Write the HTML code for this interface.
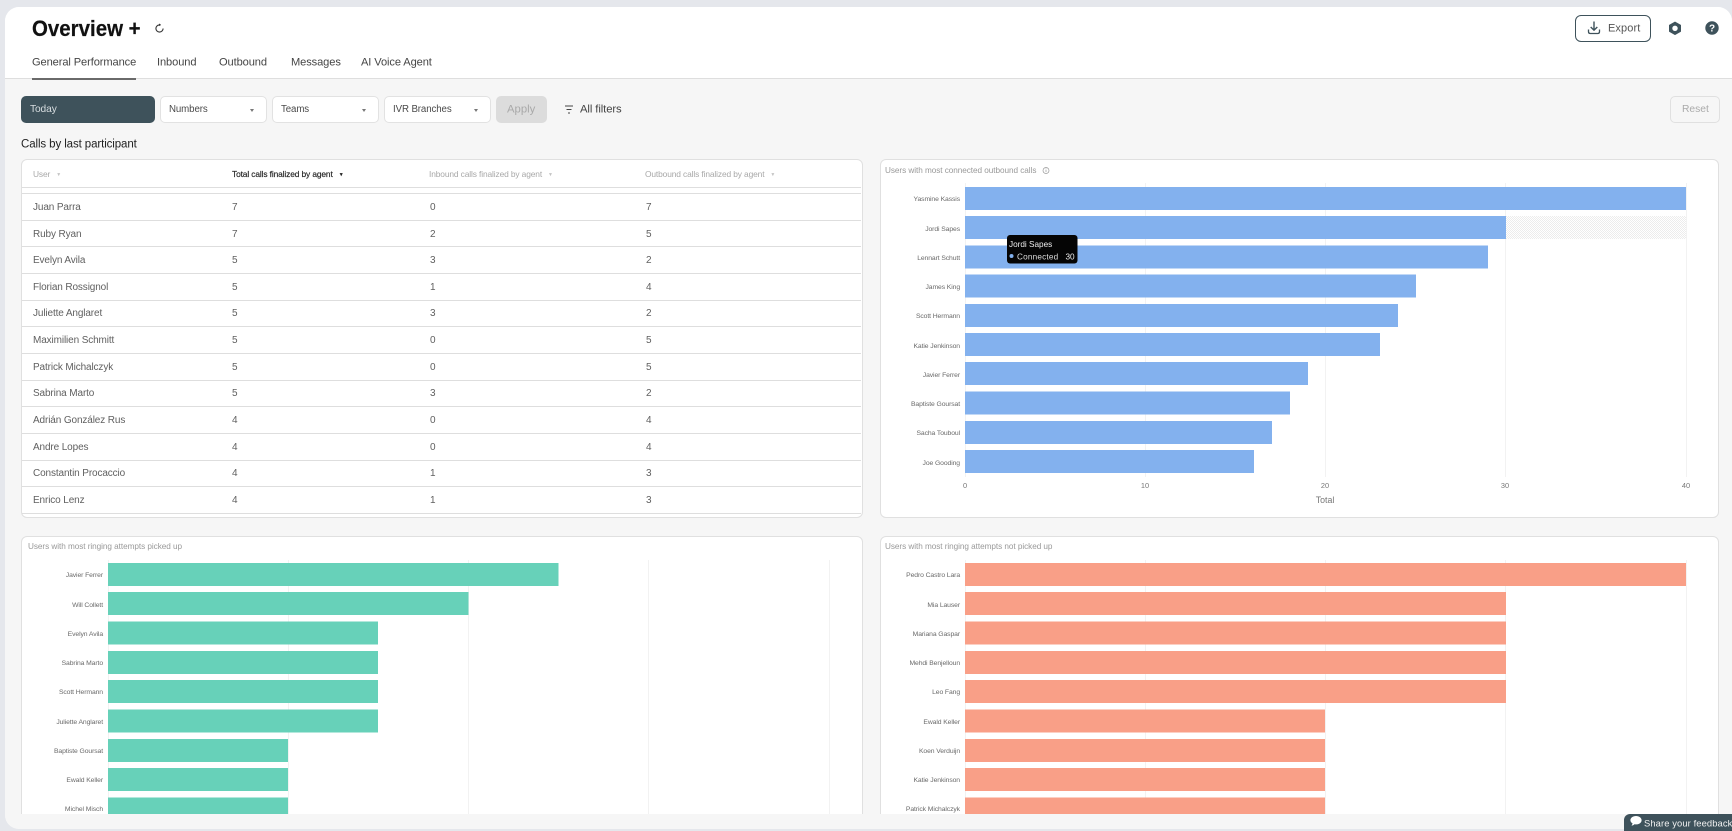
<!DOCTYPE html>
<html><head><meta charset="utf-8"><title>Overview</title>
<style>
html,body{margin:0;padding:0;width:1732px;height:831px;overflow:hidden;background:#e5e7ec;font-family:"Liberation Sans",sans-serif}
#panel{position:absolute;left:5px;top:7px;width:1727px;height:822px;background:#f6f6f6;border-radius:14px 14px 0 14px;overflow:hidden}
#page{position:absolute;left:-5px;top:-7px;width:1732px;height:831px}
.t{position:absolute;white-space:nowrap;line-height:1;transform:translateY(-50%)}
.box{position:absolute;box-sizing:border-box}
.tab{font-size:11.100px;color:#454545;top:63px;letter-spacing:-.1px}
.btn{background:#fff;border:1px solid #e2e2e2;border-radius:5px;top:96px;height:27px}
.f{font-size:9.700px;color:#4a4a4a;top:110px;letter-spacing:-.1px}
.arr{position:absolute;top:108.500px;width:0;height:0;border-left:2.500px solid transparent;border-right:2.500px solid transparent;border-top:3px solid #777}
.card{background:#fff;border:1px solid #e0e0e0;border-radius:6px}
.line{position:absolute;left:22px;width:839px;height:1px;background:#dedede}
.h{font-size:8.400px;color:#a8a8a8;top:174px;letter-spacing:-.12px}
.h span{font-size:5px;margin-left:6px;color:#c4c4c4;vertical-align:1px}
.c{font-size:10px;color:#606060;letter-spacing:-.12px;margin-top:1px}
svg{position:absolute;left:0;top:0}
svg text{font-family:"Liberation Sans",sans-serif}
.l{font-size:6.800px;fill:#6a6a6a;text-anchor:end;letter-spacing:-.1px}
.a{font-size:7.400px;fill:#777;text-anchor:middle}
.ct{font-size:8.200px;fill:#999;letter-spacing:-.05px}
.g{stroke:#f2f2f2;stroke-width:1}
</style></head><body>
<div id="panel"><div id="page">

<div class="box" style="left:0;top:0;width:1732px;height:79px;background:#fff;border-bottom:1px solid #dedede"></div>
<div class="t" style="left:32px;top:28.500px;font-size:22px;font-weight:bold;color:#111;-webkit-text-stroke:.2px #111;transform:translateY(-50%) scaleX(.93);transform-origin:left center">Overview +</div>
<svg width="1732" height="831" style="pointer-events:none">
<circle cx="159.500" cy="28.500" r="3.600" fill="none" stroke="#333" stroke-width="1.100" stroke-dasharray="18 5"/>
<path d="M159 23.500l2 1.300-2 1.300z" fill="#333"/>
</svg>

<div class="t tab" style="left:32px">General Performance</div>
<div class="t tab" style="left:157px">Inbound</div>
<div class="t tab" style="left:219px">Outbound</div>
<div class="t tab" style="left:291px">Messages</div>
<div class="t tab" style="left:361px">AI Voice Agent</div>
<div class="box" style="left:32px;top:78px;width:104px;height:2px;background:#6a6a6a"></div>

<div class="box" style="left:1575px;top:15px;width:76px;height:27px;border:1px solid #3e525b;border-radius:6px;background:#fff"></div>
<svg width="1732" height="831">
<path d="M1594 21.500v8.500M1590.700 27l3.300 3.200 3.300-3.200" fill="none" stroke="#3e525b" stroke-width="1.400"/>
<path d="M1588.500 29.500v2.300q0 1.700 1.700 1.700h7.600q1.700 0 1.700-1.700v-2.300" fill="none" stroke="#3e525b" stroke-width="1.300"/>
<path d="M1675 22.300l5.300 3v6l-5.300 3-5.300-3v-6z" fill="#3e525b" stroke="#3e525b" stroke-width="1.400" stroke-linejoin="round"/>
<circle cx="1675" cy="28.300" r="2.700" fill="#fff"/>
<circle cx="1712" cy="28" r="6.700" fill="#3e525b"/>
<text x="1712" y="31.500" text-anchor="middle" font-size="10" font-weight="bold" fill="#fff">?</text>
</svg>
<div class="t" style="left:1608px;top:29px;font-size:11px;color:#555;letter-spacing:.1px">Export</div>

<div class="box" style="left:21px;top:96px;width:134px;height:27px;background:#3e525b;border-radius:5px"></div>
<div class="t f" style="left:30px;color:#d8dde0;font-size:10.200px">Today</div>
<div class="box btn" style="left:160px;width:107px"></div>
<div class="t f" style="left:169px">Numbers</div><div class="arr" style="left:250px"></div>
<div class="box btn" style="left:272px;width:107px"></div>
<div class="t f" style="left:281px">Teams</div><div class="arr" style="left:362px"></div>
<div class="box btn" style="left:384px;width:107px"></div>
<div class="t f" style="left:393px">IVR Branches</div><div class="arr" style="left:474px"></div>
<div class="box" style="left:496px;top:96px;width:51px;height:27px;background:#dcdcdc;border-radius:5px"></div>
<div class="t" style="left:507px;top:110px;font-size:11.300px;color:#a9a9a9">Apply</div>
<svg width="1732" height="831"><path d="M565 106h8M566.500 109.500h5M568 113h2" stroke="#444" stroke-width="1" fill="none"/></svg>
<div class="t" style="left:580px;top:110px;font-size:11.300px;color:#444;letter-spacing:-.1px">All filters</div>
<div class="box" style="left:1670px;top:96px;width:50px;height:27px;border:1px solid #e0e0e0;border-radius:5px"></div>
<div class="t" style="left:1682px;top:110px;font-size:10.300px;color:#aaa">Reset</div>

<div class="t" style="left:21px;top:145px;font-size:11.500px;color:#222;letter-spacing:-.1px">Calls by last participant</div>

<div class="box card" style="left:21px;top:159px;width:842px;height:359px"></div>
<div class="t h" style="left:33px">User<span>&#9660;</span></div>
<div class="t h" style="left:232px;color:#222;-webkit-text-stroke:.15px #222">Total calls finalized by agent<span style="color:#222">&#9660;</span></div>
<div class="t h" style="left:429px">Inbound calls finalized by agent<span>&#9660;</span></div>
<div class="t h" style="left:645px">Outbound calls finalized by agent<span>&#9660;</span></div>
<div class="line" style="top:187px"></div>
<div class="line" style="top:193px"></div>
<div class="line" style="top:220px"></div>
<div class="line" style="top:246px"></div>
<div class="line" style="top:273px"></div>
<div class="line" style="top:300px"></div>
<div class="line" style="top:326px"></div>
<div class="line" style="top:353px"></div>
<div class="line" style="top:380px"></div>
<div class="line" style="top:406px"></div>
<div class="line" style="top:433px"></div>
<div class="line" style="top:460px"></div>
<div class="line" style="top:486px"></div>
<div class="line" style="top:513px"></div>

<div class="t c" style="left:33px;top:207px">Juan Parra</div><div class="t c" style="left:232px;top:207px">7</div><div class="t c" style="left:430px;top:207px">0</div><div class="t c" style="left:646px;top:207px">7</div>
<div class="t c" style="left:33px;top:234px">Ruby Ryan</div><div class="t c" style="left:232px;top:234px">7</div><div class="t c" style="left:430px;top:234px">2</div><div class="t c" style="left:646px;top:234px">5</div>
<div class="t c" style="left:33px;top:260px">Evelyn Avila</div><div class="t c" style="left:232px;top:260px">5</div><div class="t c" style="left:430px;top:260px">3</div><div class="t c" style="left:646px;top:260px">2</div>
<div class="t c" style="left:33px;top:287px">Florian Rossignol</div><div class="t c" style="left:232px;top:287px">5</div><div class="t c" style="left:430px;top:287px">1</div><div class="t c" style="left:646px;top:287px">4</div>
<div class="t c" style="left:33px;top:313px">Juliette Anglaret</div><div class="t c" style="left:232px;top:313px">5</div><div class="t c" style="left:430px;top:313px">3</div><div class="t c" style="left:646px;top:313px">2</div>
<div class="t c" style="left:33px;top:340px">Maximilien Schmitt</div><div class="t c" style="left:232px;top:340px">5</div><div class="t c" style="left:430px;top:340px">0</div><div class="t c" style="left:646px;top:340px">5</div>
<div class="t c" style="left:33px;top:367px">Patrick Michalczyk</div><div class="t c" style="left:232px;top:367px">5</div><div class="t c" style="left:430px;top:367px">0</div><div class="t c" style="left:646px;top:367px">5</div>
<div class="t c" style="left:33px;top:393px">Sabrina Marto</div><div class="t c" style="left:232px;top:393px">5</div><div class="t c" style="left:430px;top:393px">3</div><div class="t c" style="left:646px;top:393px">2</div>
<div class="t c" style="left:33px;top:420px">Adrián González Rus</div><div class="t c" style="left:232px;top:420px">4</div><div class="t c" style="left:430px;top:420px">0</div><div class="t c" style="left:646px;top:420px">4</div>
<div class="t c" style="left:33px;top:447px">Andre Lopes</div><div class="t c" style="left:232px;top:447px">4</div><div class="t c" style="left:430px;top:447px">0</div><div class="t c" style="left:646px;top:447px">4</div>
<div class="t c" style="left:33px;top:473px">Constantin Procaccio</div><div class="t c" style="left:232px;top:473px">4</div><div class="t c" style="left:430px;top:473px">1</div><div class="t c" style="left:646px;top:473px">3</div>
<div class="t c" style="left:33px;top:500px">Enrico Lenz</div><div class="t c" style="left:232px;top:500px">4</div><div class="t c" style="left:430px;top:500px">1</div><div class="t c" style="left:646px;top:500px">3</div>

<div class="box card" style="left:880px;top:159px;width:839px;height:359px"></div>
<div class="box card" style="left:21px;top:536px;width:842px;height:320px"></div>
<div class="box card" style="left:880px;top:536px;width:839px;height:320px"></div>

<svg width="1732" height="831">
<defs><pattern id="h" width="2" height="2" patternUnits="userSpaceOnUse"><rect width="1" height="1" fill="#ececec"/><rect x="1" y="1" width="1" height="1" fill="#ececec"/></pattern></defs>

<text class="ct" x="885" y="173">Users with most connected outbound calls</text>
<circle cx="1046" cy="170.500" r="3" fill="none" stroke="#999" stroke-width=".7"/><path d="M1046 169.800v2.300M1046 168.500v.6" stroke="#999" stroke-width=".7"/>
<path class="g" d="M965.500 183V477M1145.500 183V477M1325.500 183V477M1505.500 183V477M1686.500 183V477"/>
<rect x="1505" y="216" width="181" height="23" fill="url(#h)"/>
<g fill="#83b1ee">
<rect x="965" y="187" width="721" height="23"/>
<rect x="965" y="216" width="541" height="23"/>
<rect x="965" y="245.500" width="523" height="23"/>
<rect x="965" y="274.500" width="451" height="23"/>
<rect x="965" y="304" width="433" height="23"/>
<rect x="965" y="333" width="415" height="23"/>
<rect x="965" y="362" width="343" height="23"/>
<rect x="965" y="391.500" width="325" height="23"/>
<rect x="965" y="421" width="307" height="23"/>
<rect x="965" y="450" width="289" height="23"/>
</g>
<text class="l" x="960" y="201">Yasmine Kassis</text>
<text class="l" x="960" y="231">Jordi Sapes</text>
<text class="l" x="960" y="260">Lennart Schutt</text>
<text class="l" x="960" y="289">James King</text>
<text class="l" x="960" y="318">Scott Hermann</text>
<text class="l" x="960" y="348">Katie Jenkinson</text>
<text class="l" x="960" y="377">Javier Ferrer</text>
<text class="l" x="960" y="406">Baptiste Goursat</text>
<text class="l" x="960" y="435">Sacha Touboul</text>
<text class="l" x="960" y="465">Joe Gooding</text>
<text class="a" x="965" y="488">0</text><text class="a" x="1145" y="488">10</text><text class="a" x="1325" y="488">20</text><text class="a" x="1505" y="488">30</text><text class="a" x="1686" y="488">40</text>
<text x="1325" y="503" text-anchor="middle" font-size="8.800" fill="#777">Total</text>

<rect x="1007" y="235" width="70.500" height="28.500" rx="3" fill="#050505"/>
<text x="1009" y="247" font-size="8.200" fill="#eee">Jordi Sapes</text>
<circle cx="1011.500" cy="256" r="2" fill="#83b1ee"/>
<text x="1017" y="259.500" font-size="8.200" fill="#ddd" letter-spacing=".2">Connected</text>
<text x="1065.500" y="259.500" font-size="8.200" fill="#eee">30</text>

<text class="ct" x="28" y="549">Users with most ringing attempts picked up</text>
<path class="g" d="M108.500 560V816M288.500 560V816M468.500 560V816M648.500 560V816M829.500 560V816"/>
<g fill="#67d1b9">
<rect x="108" y="563" width="450.500" height="23"/>
<rect x="108" y="592" width="360.500" height="23"/>
<rect x="108" y="621.500" width="270" height="23"/>
<rect x="108" y="651" width="270" height="23"/>
<rect x="108" y="680" width="270" height="23"/>
<rect x="108" y="709.500" width="270" height="23"/>
<rect x="108" y="739" width="180" height="23"/>
<rect x="108" y="768" width="180" height="23"/>
<rect x="108" y="797.500" width="180" height="23"/>
</g>
<text class="l" x="103" y="577">Javier Ferrer</text>
<text class="l" x="103" y="607">Will Collett</text>
<text class="l" x="103" y="636">Evelyn Avila</text>
<text class="l" x="103" y="665">Sabrina Marto</text>
<text class="l" x="103" y="694">Scott Hermann</text>
<text class="l" x="103" y="724">Juliette Anglaret</text>
<text class="l" x="103" y="753">Baptiste Goursat</text>
<text class="l" x="103" y="782">Ewald Keller</text>
<text class="l" x="103" y="811">Michel Misch</text>

<text class="ct" x="885" y="549">Users with most ringing attempts not picked up</text>
<path class="g" d="M965.500 560V816M1145.500 560V816M1325.500 560V816M1505.500 560V816M1686.500 560V816"/>
<g fill="#f99f87">
<rect x="965" y="563" width="721" height="23"/>
<rect x="965" y="592" width="541" height="23"/>
<rect x="965" y="621.500" width="541" height="23"/>
<rect x="965" y="651" width="541" height="23"/>
<rect x="965" y="680" width="541" height="23"/>
<rect x="965" y="709.500" width="360" height="23"/>
<rect x="965" y="739" width="360" height="23"/>
<rect x="965" y="768" width="360" height="23"/>
<rect x="965" y="797.500" width="360" height="23"/>
</g>
<text class="l" x="960" y="577">Pedro Castro Lara</text>
<text class="l" x="960" y="607">Mia Lauser</text>
<text class="l" x="960" y="636">Mariana Gaspar</text>
<text class="l" x="960" y="665">Mehdi Benjelloun</text>
<text class="l" x="960" y="694">Leo Fang</text>
<text class="l" x="960" y="724">Ewald Keller</text>
<text class="l" x="960" y="753">Koen Verduijn</text>
<text class="l" x="960" y="782">Katie Jenkinson</text>
<text class="l" x="960" y="811">Patrick Michalczyk</text>
</svg>

<div class="box" style="left:0;top:814px;width:1732px;height:17px;background:#f6f6f6"></div>
</div></div>

<div class="box" style="left:1624px;top:814px;width:108px;height:17px;background:#3e525b;border-radius:6px 0 0 0;overflow:hidden"></div>
<svg width="1732" height="831">
<path d="M1636 816c3.200 0 5.600 1.900 5.600 4.200s-2.400 4.200-5.600 4.200c-.6 0-1.100 0-1.600-.2-.8.900-1.800 1.300-2.900 1.400.6-.7.900-1.400 1-2.300-1.300-.7-2.100-1.900-2.100-3.100 0-2.300 2.400-4.200 5.600-4.200z" fill="#fff"/>
</svg>
<div class="t" style="left:1644px;top:822.500px;font-size:9.400px;color:#f2f2f2;letter-spacing:.1px">Share your feedback</div>
</body></html>
